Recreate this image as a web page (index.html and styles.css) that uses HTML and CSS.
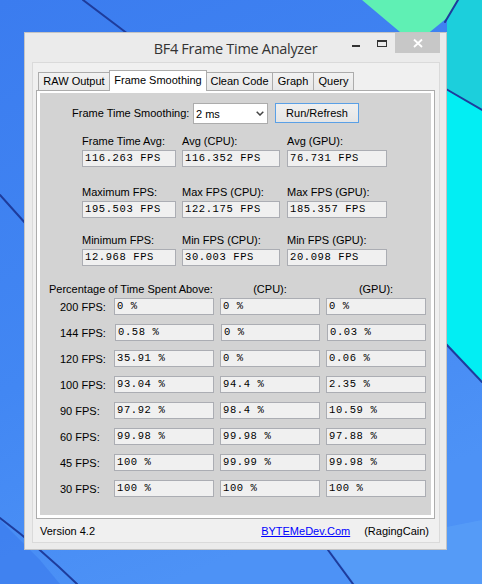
FILE: index.html
```html
<!DOCTYPE html>
<html lang="en">
<head>
<meta charset="utf-8">
<title>BF4 Frame Time Analyzer</title>
<link rel="stylesheet" href="styles.css">
</head>
<body>
<!-- desktop wallpaper -->
<svg class="wallpaper" width="482" height="584" viewBox="0 0 482 584" aria-hidden="true">
  <defs>
    <linearGradient id="deskBlue" x1="0" y1="0" x2="0.35" y2="1">
      <stop offset="0" stop-color="#3b7cef"/>
      <stop offset="0.6" stop-color="#4287f3"/>
      <stop offset="1" stop-color="#4d92f6"/>
    </linearGradient>
  </defs>
  <rect width="482" height="584" fill="url(#deskBlue)"/>
  <polygon points="0,440 0,520 40,560 60,584 0,584" fill="#3a79ec" opacity="0.6"/>
  <polygon points="330,550 482,520 482,584 355,584" fill="#58a0f8" opacity="0.7"/>
  <polygon points="362,0 458,0 447,18 420,40 400,32" fill="#5ff0b4"/>
  <polygon points="458,0 482,0 482,110 447,89 447,18" fill="#1ccfdc"/>
  <polygon points="447,89 482,110 482,382 447,344" fill="#02eef3"/>
  <g fill="none" stroke="#1e3c9c" stroke-width="2" stroke-linecap="round">
    <path d="M83,0 L128,34"/>
    <path d="M0,195 L26,224"/>
    <path d="M0,518 Q40,548 77,584"/>
    <path d="M328,550 L353,584"/>
    <path d="M458,0 L445,22"/>
    <path d="M446,89 L482,110"/>
    <path d="M446,344 L482,382"/>
  </g>
</svg>

<div class="window">
  <div class="titlebar">
    <span class="title">BF4 Frame Time Analyzer</span>
    <div class="caption-buttons">
      <span class="cap cap-min"><svg width="27" height="20" viewBox="0 0 27 20"><rect x="10" y="12" width="8" height="2" fill="#333"/></svg></span>
      <span class="cap cap-max"><svg width="26" height="20" viewBox="0 0 26 20"><rect x="8.5" y="7.5" width="9" height="6" fill="none" stroke="#333"/><line x1="8" y1="8.5" x2="18" y2="8.5" stroke="#333"/></svg></span>
      <span class="cap cap-close"><svg width="45" height="20" viewBox="0 0 45 20"><path d="M19 6.5 L27 14 M27 6.5 L19 14" stroke="#fff" stroke-width="1.8"/></svg></span>
    </div>
  </div>

  <div class="client">
    <div class="tabs">
      <div class="tab tab-raw">RAW Output</div>
      <div class="tab tab-smooth active">Frame Smoothing</div>
      <div class="tab tab-clean">Clean Code</div>
      <div class="tab tab-graph">Graph</div>
      <div class="tab tab-query">Query</div>
    </div>

    <div class="tab-body">
      <div class="tab-page">
        <div class="smooth-row">
          <span class="lbl">Frame Time Smoothing:</span>
          <div class="combo">
            <span>2 ms</span>
            <svg width="8" height="5" viewBox="0 0 8 5"><path d="M0.7 0.7 L4 4 L7.3 0.7" fill="none" stroke="#444" stroke-width="1.5"/></svg>
          </div>
          <button class="btn" type="button">Run/Refresh</button>
        </div>

        <div class="stat-row first">
          <div class="stat"><div class="cap-lbl">Frame Time Avg:</div><div class="val">116.263 FPS</div></div>
          <div class="stat"><div class="cap-lbl">Avg (CPU):</div><div class="val mid">116.352 FPS</div></div>
          <div class="stat"><div class="cap-lbl">Avg (GPU):</div><div class="val">76.731 FPS</div></div>
        </div>
        <div class="stat-row second">
          <div class="stat"><div class="cap-lbl">Maximum FPS:</div><div class="val">195.503 FPS</div></div>
          <div class="stat"><div class="cap-lbl">Max FPS (CPU):</div><div class="val mid">122.175 FPS</div></div>
          <div class="stat"><div class="cap-lbl">Max FPS (GPU):</div><div class="val">185.357 FPS</div></div>
        </div>
        <div class="stat-row third">
          <div class="stat"><div class="cap-lbl">Minimum FPS:</div><div class="val">12.968 FPS</div></div>
          <div class="stat"><div class="cap-lbl">Min FPS (CPU):</div><div class="val mid">30.003 FPS</div></div>
          <div class="stat"><div class="cap-lbl">Min FPS (GPU):</div><div class="val">20.098 FPS</div></div>
        </div>

        <div class="pct-head">
          <span class="pct-title">Percentage of Time Spent Above:</span>
          <span class="pct-col">(CPU):</span>
          <span class="pct-col">(GPU):</span>
        </div>
        <div class="pct-grid">
          <span class="rlabel">200 FPS:</span><div class="val">0 %</div><div class="val">0 %</div><div class="val">0 %</div>
          <span class="rlabel">144 FPS:</span><div class="val shift">0.58 %</div><div class="val shift">0 %</div><div class="val shift">0.03 %</div>
          <span class="rlabel">120 FPS:</span><div class="val">35.91 %</div><div class="val">0 %</div><div class="val">0.06 %</div>
          <span class="rlabel">100 FPS:</span><div class="val">93.04 %</div><div class="val">94.4 %</div><div class="val">2.35 %</div>
          <span class="rlabel">90 FPS:</span><div class="val">97.92 %</div><div class="val">98.4 %</div><div class="val">10.59 %</div>
          <span class="rlabel">60 FPS:</span><div class="val">99.98 %</div><div class="val">99.98 %</div><div class="val">97.88 %</div>
          <span class="rlabel">45 FPS:</span><div class="val">100 %</div><div class="val">99.99 %</div><div class="val">99.98 %</div>
          <span class="rlabel">30 FPS:</span><div class="val">100 %</div><div class="val">100 %</div><div class="val">100 %</div>
        </div>
      </div>
    </div>

    <div class="footer">
      <span>Version 4.2</span>
      <a class="link" href="#">BYTEMeDev.Com</a>
      <span class="author">(RagingCain)</span>
    </div>
  </div>
</div>
</body>
</html>
```

FILE: styles.css
```css
* {
  box-sizing: border-box;
}

html,
body {
  margin: 0;
  padding: 0;
}

body {
  position: relative;
  width: 482px;
  height: 584px;
  overflow: hidden;
  font-family: "Liberation Sans", Arial, sans-serif;
  font-size: 11px;
  color: #000;
  background: #3d7ef0;
}

.wallpaper {
  position: absolute;
  left: 0;
  top: 0;
  z-index: 0;
  display: block;
}

/* ---------- window frame ---------- */
.window {
  position: relative;
  z-index: 1;
  margin: 32px 0 0 24px;
  width: 423px;
  height: 518px;
  background: #ebebeb;
  border: 1px solid #c4c4c4;
  display: flex;
  flex-direction: column;
}

.titlebar {
  height: 29px;
  flex: none;
  display: grid;
  grid-template-columns: 1fr auto 1fr;
  align-items: center;
}

.title {
  grid-column: 2;
  font-family: "Open Sans", "Noto Sans", sans-serif;
  font-size: 14.5px;
  letter-spacing: -0.3px;
  color: #333;
  white-space: nowrap;
  padding-top: 1px;
}

.caption-buttons {
  grid-column: 3;
  justify-self: end;
  align-self: start;
  display: flex;
  margin-right: 6px;
}

.cap {
  display: block;
  height: 20px;
}

.cap svg {
  display: block;
}

.cap-close {
  background: #c7c7c7;
}

/* ---------- client area ---------- */
.client {
  height: 481px;
  margin: 0 6px 0 7px;
  background: #f0f0f0;
  border: 1px solid #dadada;
  display: flex;
  flex-direction: column;
}

.tabs {
  position: relative;
  z-index: 2;
  display: flex;
  align-items: flex-end;
  height: 20px;
  margin: 7px 0 0 5px;
  flex: none;
}

.tab {
  height: 18px;
  line-height: 17px;
  border: 1px solid #acacac;
  border-bottom: none;
  background: linear-gradient(#f2f2f2, #e8e8e8);
  text-align: center;
  white-space: nowrap;
  margin-left: -1px;
}

.tab:first-child {
  margin-left: 0;
}

.tab.active {
  height: 21px;
  line-height: 18px;
  margin-bottom: -1px;
  background: #fff;
  position: relative;
  z-index: 1;
}

.tab-raw { width: 72px; }
.tab-smooth { width: 98px; }
.tab-clean { width: 67px; }
.tab-graph { width: 42px; }
.tab-query { width: 41px; }

.tab-body {
  height: 429px;
  margin: 0 4px 0 3px;
  flex: none;
  background: #fff;
  border: 1px solid #acacac;
  padding: 2px 3px 3px 3px;
  display: flex;
}

.tab-page {
  flex: 1;
  background: #d3d3d3;
  display: flex;
  flex-direction: column;
  align-items: flex-start;
}

/* ---------- smoothing controls ---------- */
.smooth-row {
  display: grid;
  grid-template-columns: 121px 75px 84px;
  align-items: start;
  margin: 10px 0 0 32px;
}

.lbl {
  line-height: 21px;
  white-space: nowrap;
}

.combo {
  height: 21px;
  background: #fff;
  border: 1px solid #acacac;
  display: flex;
  align-items: center;
  justify-content: space-between;
  padding: 0 3px 0 2px;
}

.btn {
  height: 20px;
  margin-left: 7px;
  width: 84px;
  padding: 0;
  font: inherit;
  color: #000;
  border: 1px solid #5aa0e6;
  background: linear-gradient(#f0f0f0, #e5e5e5);
}

/* ---------- stats ---------- */
.stat-row {
  display: grid;
  grid-template-columns: 94px 99px 100px;
  column-gap: 6px;
  margin-left: 42px;
}

.stat-row.first { margin-top: 10px; }
.stat-row.second { margin-top: 18px; }
.stat-row.third { margin-top: 15px; }

.cap-lbl {
  height: 14px;
  line-height: 14px;
  margin-bottom: 2px;
  white-space: nowrap;
}

.val {
  height: 17px;
  border: 1px solid #abadb3;
  background: #f0f0f0;
  font-family: "Liberation Mono", "DejaVu Sans Mono", monospace;
  font-size: 10.5px;
  letter-spacing: 0.6px;
  line-height: 15px;
  padding: 0 2px;
  white-space: nowrap;
  overflow: hidden;
  color: #000;
}

.val.mid {
  width: 98px;
}

/* ---------- percentage table ---------- */
.pct-head,
.pct-grid {
  display: grid;
  grid-template-columns: 48px 100px 100px 100px;
  column-gap: 6px;
  margin-left: 20px;
}

.pct-head {
  margin-top: 16px;
  margin-bottom: 2px;
  line-height: 14px;
  height: 14px;
}

.pct-title {
  grid-column: 1 / 3;
  margin-left: -11px;
  white-space: nowrap;
}

.pct-col {
  text-align: center;
}

.pct-grid {
  row-gap: 9px;
  align-items: center;
}

.rlabel {
  white-space: nowrap;
}

.val.shift {
  margin-left: 1px;
}

/* ---------- footer ---------- */
.footer {
  flex: 1;
  display: flex;
  align-items: center;
  padding: 0 10px 0 7px;
}

.link {
  margin-left: auto;
  color: #0000ff;
  text-decoration: underline;
}

.author {
  margin-left: 14px;
}
```
